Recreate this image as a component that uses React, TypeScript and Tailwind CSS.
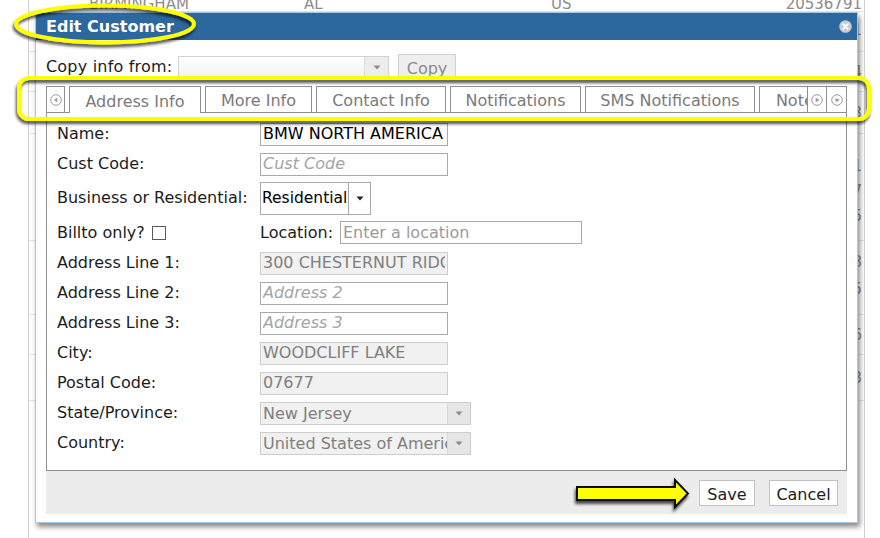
import type { ReactNode } from 'react';

type Dir = 'left' | 'right' | 'down';

const backdropRows = [
  { cls: 'h-[40px] pt-[6px] leading-[24px]', nums: ['20536811'] },
  { cls: 'h-[40px] pt-[8px] leading-[24px]', nums: ['20536794'] },
  { cls: 'h-[42px] pt-[9px] leading-[24px]', nums: ['20536813'] },
  { cls: 'h-[107px] pt-[20px] leading-[25px]', nums: ['20536821', '20536797', '20536815'] },
  { cls: 'h-[74px] pt-[8px] leading-[27px]', nums: ['20536818', '20536795'] },
  { cls: 'h-[40px] pt-[8px] leading-[24px]', nums: ['20536816'] },
  { cls: 'h-[46px] pt-[11px] leading-[24px]', nums: ['20536803'] },
];

function CircleArrow({ dir }: { dir: Dir }) {
  const pts = {
    left: '7.3,3.4 7.3,8.6 3.8,6',
    right: '4.7,3.4 4.7,8.6 8.2,6',
    down: '3.4,4.7 8.6,4.7 6,8.2',
  }[dir];
  return (
    <svg width="12" height="12" viewBox="0 0 12 12">
      <circle cx="6" cy="6" r="5.3" fill="#fff" stroke="#9c9c9c" strokeWidth="1" />
      <polygon points={pts} fill="#9c9c9c" />
    </svg>
  );
}

function Caret({ color }: { color: string }) {
  return (
    <svg width="8" height="5" viewBox="0 0 8 5">
      <polygon points="0.5,0.5 7.5,0.5 4,4.5" fill={color} />
    </svg>
  );
}

function CloseIcon() {
  return (
    <svg width="13" height="13" viewBox="0 0 13 13">
      <circle cx="6.5" cy="6.5" r="6.3" fill="#c8ccd2" />
      <path d="M4.2 4.2 L8.8 8.8 M8.8 4.2 L4.2 8.8" stroke="#fff" strokeWidth="1.8" strokeLinecap="round" />
    </svg>
  );
}

function Row({ label, h = 'h-[30px]', children }: { label: ReactNode; h?: string; children?: ReactNode }) {
  return (
    <div className={`flex items-center ${h}`}>
      <div className="flex w-[203px] shrink-0 items-center text-[16px] text-[#1c1c1c]">{label}</div>
      {children}
    </div>
  );
}

const boxOn = 'h-[23px] w-[188px] border border-[#a9a9a9] bg-white px-[2px] text-[16px] text-black outline-none';
const boxOff = 'h-[23px] w-[188px] border border-[#cdcdcd] bg-[#f1f1f1] px-[2px] text-[16px] text-[#7f7f7f] outline-none';
const hint = 'placeholder:italic placeholder:text-[#a5a5a5]';

function LockedSelect({ value }: { value: string }) {
  return (
    <div className="flex h-[23px] w-[211px] border border-[#cdcdcd] bg-[#f1f1f1] text-[16px] text-[#7f7f7f]">
      <span className="flex-1 overflow-hidden whitespace-nowrap pl-[2px] leading-[21px]">{value}</span>
      <span className="flex w-[23px] shrink-0 items-center justify-center border-l border-[#d8d8d8] bg-[#e6e6e6]">
        <Caret color="#8c8c8c" />
      </span>
    </div>
  );
}

const tabs = [
  { name: 'Address Info', w: 'w-[132px]', active: true },
  { name: 'More Info', w: 'w-[107px]' },
  { name: 'Contact Info', w: 'w-[130px]' },
  { name: 'Notifications', w: 'w-[131px]' },
  { name: 'SMS Notifications', w: 'w-[170px]' },
  { name: 'Notes', w: 'w-[80px]' },
];

function Dialog() {
  return (
    <div className="absolute left-[35px] top-[12px] flex h-[511px] w-[823px] flex-col border border-[#a9c8e4] bg-white shadow-[2px_4px_5px_rgba(0,0,0,0.45)]">
      <div className="flex h-[27px] shrink-0 items-center justify-between bg-[#2c679e] pl-[10px] pr-[5px]">
        <span className="text-[16px] font-bold text-white">Edit Customer</span>
        <CloseIcon />
      </div>

      <div className="flex flex-1 flex-col px-[10px]">
        <div className="mt-[13px] flex h-[28px] items-center">
          <span className="w-[132px] shrink-0 whitespace-nowrap text-[16px] tracking-[0.2px] text-[#1c1c1c]">Copy info from:</span>
          <div className="flex h-[22px] w-[211px] border border-[#d2d2d2] bg-gradient-to-b from-white to-[#f2f2f2]">
            <span className="flex-1" />
            <span className="flex w-[24px] items-center justify-center border-l border-[#dcdcdc] bg-[#ededed]">
              <Caret color="#8c8c8c" />
            </span>
          </div>
          <button className="ml-[9px] h-[26px] w-[58px] border border-[#d2d2d2] bg-[#eeeeee] pt-[2px] text-[16px] text-[#8a8a8a]">
            Copy
          </button>
        </div>

        <div className="relative z-10 mt-[5px] flex h-[27px] items-start">
          <span className="flex h-[26px] w-[19px] shrink-0 items-center justify-center border-x border-t border-[#8f8f8f] bg-white">
            <CircleArrow dir="left" />
          </span>
          <div className="flex h-[27px] flex-1 items-start gap-[4px] overflow-hidden pl-[4px]">
            {tabs.map((t) => (
              <span
                key={t.name}
                className={`flex shrink-0 items-center justify-center whitespace-nowrap border-x border-t border-[#8f8f8f] bg-white pt-[3px] text-[16px] text-[#7a7a7a] ${t.w} ${t.active ? 'h-[27px]' : 'h-[26px]'}`}
              >
                {t.name}
              </span>
            ))}
          </div>
          <span className="flex h-[26px] w-[20px] shrink-0 items-center justify-center border-x border-t border-[#8f8f8f] bg-white">
            <CircleArrow dir="right" />
          </span>
          <span className="flex h-[26px] w-[20px] shrink-0 items-center justify-center border-r border-t border-[#8f8f8f] bg-white">
            <CircleArrow dir="down" />
          </span>
        </div>

        <div className="-mt-px h-[359px] border border-[#8f8f8f] pl-[10px] pt-[6px]">
          <Row label="Name:">
            <input readOnly value="BMW NORTH AMERICA" className={boxOn} />
          </Row>
          <Row label="Cust Code:">
            <input readOnly placeholder="Cust Code" className={`${boxOn} ${hint}`} />
          </Row>
          <Row label="Business or Residential:" h="h-[38px]">
            <div className="flex h-[33px] w-[111px] border border-[#a9a9a9] bg-white text-[15.5px] text-black">
              <span className="flex-1 overflow-hidden whitespace-nowrap pl-[1px] leading-[31px]">Residential</span>
              <span className="flex w-[22px] shrink-0 items-center justify-center border-l border-[#a9a9a9]">
                <Caret color="#222" />
              </span>
            </div>
          </Row>
          <Row
            h="h-[31px]"
            label={
              <>
                Billto only?
                <input type="checkbox" className="ml-[7px] h-[14px] w-[14px] appearance-none border border-[#5a5a5a] bg-white" />
              </>
            }
          >
            <span className="w-[80px] shrink-0 text-[16px] text-[#1c1c1c]">Location:</span>
            <input
              readOnly
              placeholder="Enter a location"
              className="h-[23px] w-[242px] border border-[#a9a9a9] bg-white px-[2px] text-[16px] outline-none placeholder:text-[#9a9a9a]"
            />
          </Row>
          <Row label="Address Line 1:">
            <input readOnly value="300 CHESTERNUT RIDGE" className={boxOff} />
          </Row>
          <Row label="Address Line 2:">
            <input readOnly placeholder="Address 2" className={`${boxOn} ${hint}`} />
          </Row>
          <Row label="Address Line 3:">
            <input readOnly placeholder="Address 3" className={`${boxOn} ${hint}`} />
          </Row>
          <Row label="City:">
            <input readOnly value="WOODCLIFF LAKE" className={boxOff} />
          </Row>
          <Row label="Postal Code:">
            <input readOnly value="07677" className={boxOff} />
          </Row>
          <Row label="State/Province:">
            <LockedSelect value="New Jersey" />
          </Row>
          <Row label="Country:">
            <LockedSelect value="United States of America" />
          </Row>
        </div>

        <div className="flex h-[43px] items-center justify-end gap-[14px] bg-[#ececec] pr-[9px]">
          <button className="h-[26px] w-[56px] border border-[#c3c3c3] bg-white pt-[2px] text-[16px] text-[#1c1c1c]">Save</button>
          <button className="h-[26px] w-[69px] border border-[#c3c3c3] bg-white pt-[2px] text-[16px] text-[#1c1c1c]">Cancel</button>
        </div>
      </div>
    </div>
  );
}

function Annotations() {
  return (
    <svg className="pointer-events-none absolute left-0 top-0" width="880" height="538" viewBox="0 0 880 538">
      <defs>
        <filter id="drop" x="-10%" y="-40%" width="120%" height="180%">
          <feDropShadow dx="-1" dy="3" stdDeviation="1.6" floodColor="#000" floodOpacity="0.7" />
        </filter>
      </defs>
      <ellipse cx="105" cy="24" rx="89" ry="18.5" fill="none" stroke="#ffff00" strokeWidth="4" filter="url(#drop)" />
      <rect x="19" y="78" width="850" height="41" rx="10" fill="none" stroke="#ffff00" strokeWidth="4" filter="url(#drop)" />
      <polygon
        points="577,487 675,487 675,480 688,493.5 675,507 675,500 577,500"
        fill="#ffff00"
        stroke="#111"
        strokeWidth="2"
        filter="url(#drop)"
      />
    </svg>
  );
}

export default function App() {
  return (
    <div className="relative h-[538px] w-[880px] overflow-hidden bg-white font-['DejaVu_Sans',sans-serif]">
      <div className="ml-[28px] h-[538px] w-[837px] border-x border-[#d2d2d2] text-[15px] text-[#8c8c8c]">
        <div className="flex h-[12px] overflow-hidden border-b border-[#e4e4e4] pl-[60px] pr-[2px]">
          <div className="-mt-[6px] flex w-full leading-[20px]">
            <span className="w-[215px]">BIRMINGHAM</span>
            <span className="w-[247px]">AL</span>
            <span className="flex-1">US</span>
            <span>20536791</span>
          </div>
        </div>
        {backdropRows.map((r, i) => (
          <div key={i} className={`flex flex-col items-end border-b border-[#e4e4e4] pr-[2px] ${r.cls}`}>
            {r.nums.map((n) => (
              <span key={n}>{n}</span>
            ))}
          </div>
        ))}
      </div>
      <Dialog />
      <Annotations />
    </div>
  );
}
